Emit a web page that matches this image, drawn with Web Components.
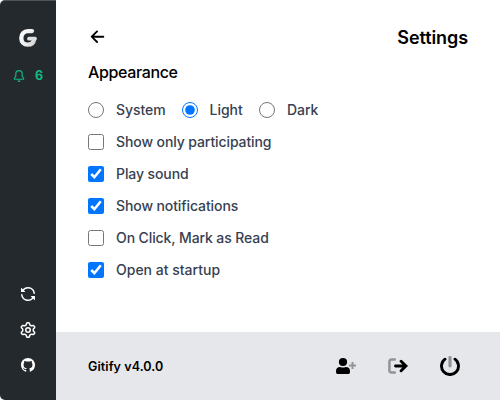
<!DOCTYPE html>
<html lang="en">
<head>
<meta charset="utf-8">
<title>Gitify</title>
<style>
html,body{margin:0;height:100%;background:#fff}
body{font-family:Inter,"Liberation Sans",sans-serif;overflow:hidden}
</style>
</head>
<body>
<gitify-app></gitify-app>
<script>
const svg = (w, h, vb, body) => `<svg width="${w}" height="${h}" viewBox="${vb}" fill="currentColor" aria-hidden="true">${body}</svg>`;
const oct = (size, d) => svg(size, size, '0 0 16 16', `<path fill-rule="evenodd" d="${d}"/>`);
const ICONS = {
  logo: svg(20, 20, '0 0 20 20', '<defs><linearGradient id="g" gradientUnits="userSpaceOnUse" x1="1" y1="4" x2="19" y2="14"><stop offset="0" stop-color="#fff"/><stop offset=".6" stop-color="#ececec"/><stop offset="1" stop-color="#cfcfcf"/></linearGradient></defs><path fill="none" stroke="url(#g)" stroke-width="4.3" stroke-linejoin="round" stroke-linecap="round" d="M14 3.1H10C6.1 3.1 3.3 6 3.3 10s2.4 6.7 6.4 6.7c3.6 0 5.9-1.5 6.3-5.2"/><rect x="9.2" y="8.7" width="9.6" height="3.9" rx="1.6" fill="#dedede"/>'),
  bell: oct(12, 'M8 16a2 2 0 0 0 1.985-1.75c.017-.137-.097-.25-.235-.25h-3.5c-.138 0-.252.113-.235.25A2 2 0 0 0 8 16ZM3 5a5 5 0 0 1 10 0v2.947c0 .05.015.098.042.139l1.703 2.555A1.519 1.519 0 0 1 13.482 13H2.518a1.516 1.516 0 0 1-1.263-2.36l1.703-2.554A.255.255 0 0 0 3 7.947Zm5-3.5A3.5 3.5 0 0 0 4.5 5v2.947c0 .346-.102.683-.294.97l-1.703 2.556a.017.017 0 0 0-.003.01l.001.006c0 .002.002.004.004.006l.006.004.007.001h10.964l.007-.001.006-.004.004-.006.001-.007a.017.017 0 0 0-.003-.01l-1.703-2.554a1.745 1.745 0 0 1-.294-.97V5A3.5 3.5 0 0 0 8 1.5Z'),
  sync: oct(16, 'M1.705 8.005a.75.75 0 0 1 .834.656 5.5 5.5 0 0 0 9.592 2.97l-1.204-1.204a.25.25 0 0 1 .177-.427h3.646a.25.25 0 0 1 .25.25v3.646a.25.25 0 0 1-.427.177l-1.38-1.38A7.002 7.002 0 0 1 1.05 8.84a.75.75 0 0 1 .656-.834ZM8 2.5a5.487 5.487 0 0 0-4.131 1.869l1.204 1.204A.25.25 0 0 1 4.896 6H1.25A.25.25 0 0 1 1 5.75V2.104a.25.25 0 0 1 .427-.177l1.38 1.38A7.002 7.002 0 0 1 14.95 7.16a.75.75 0 0 1-1.49.178A5.5 5.5 0 0 0 8 2.5Z'),
  gear: oct(16, 'M8 0a8.2 8.2 0 0 1 .701.031C9.444.095 9.99.645 10.16 1.29l.288 1.107c.018.066.079.158.212.224.231.114.454.243.668.386.123.082.233.09.299.071l1.103-.303c.644-.176 1.392.021 1.82.63.27.385.506.792.704 1.218.315.675.111 1.422-.364 1.891l-.814.806c-.049.048-.098.147-.088.294.016.257.016.515 0 .772-.01.147.038.246.088.294l.814.806c.475.469.679 1.216.364 1.891a7.977 7.977 0 0 1-.704 1.217c-.428.61-1.176.807-1.82.63l-1.102-.302c-.067-.019-.177-.011-.3.071a5.909 5.909 0 0 1-.668.386c-.133.066-.194.158-.211.224l-.29 1.106c-.168.646-.715 1.196-1.458 1.26a8.006 8.006 0 0 1-1.402 0c-.743-.064-1.289-.614-1.458-1.26l-.289-1.106c-.018-.066-.079-.158-.212-.224a5.738 5.738 0 0 1-.668-.386c-.123-.082-.233-.09-.299-.071l-1.103.303c-.644.176-1.392-.021-1.82-.63a8.12 8.12 0 0 1-.704-1.218c-.315-.675-.111-1.422.363-1.891l.815-.806c.05-.048.098-.147.088-.294a6.214 6.214 0 0 1 0-.772c.01-.147-.038-.246-.088-.294l-.815-.806C.635 6.045.431 5.298.746 4.623a7.92 7.92 0 0 1 .704-1.217c.428-.61 1.176-.807 1.82-.63l1.102.302c.067.019.177.011.3-.071.214-.143.437-.272.668-.386.133-.066.194-.158.211-.224l.29-1.106C6.009.645 6.556.095 7.299.03 7.53.01 7.764 0 8 0Zm-.571 1.525c-.036.003-.108.036-.137.146l-.289 1.105c-.147.561-.549.967-.998 1.189-.173.086-.34.183-.5.29-.417.278-.97.423-1.529.27l-1.103-.303c-.109-.03-.175.016-.195.045-.22.312-.412.644-.573.99-.014.031-.021.11.059.19l.815.806c.411.406.562.957.53 1.456a4.709 4.709 0 0 0 0 .582c.032.499-.119 1.05-.53 1.456l-.815.806c-.081.08-.073.159-.059.19.162.346.353.677.573.989.02.03.085.076.195.046l1.102-.303c.56-.153 1.113-.008 1.53.27.161.107.328.204.501.29.447.222.85.629.997 1.189l.289 1.105c.029.109.101.143.137.146a6.6 6.6 0 0 0 1.142 0c.036-.003.108-.036.137-.146l.289-1.105c.147-.561.549-.967.998-1.189.173-.086.34-.183.5-.29.417-.278.97-.423 1.529-.27l1.103.303c.109.029.175-.016.195-.045.22-.313.411-.644.573-.99.014-.031.021-.11-.059-.19l-.815-.806c-.411-.406-.562-.957-.53-1.456a4.709 4.709 0 0 0 0-.582c-.032-.499.119-1.05.53-1.456l.815-.806c.081-.08.073-.159.059-.19a6.464 6.464 0 0 0-.573-.989c-.02-.03-.085-.076-.195-.046l-1.102.303c-.56.153-1.113.008-1.53-.27a4.44 4.44 0 0 0-.501-.29c-.447-.222-.85-.629-.997-1.189l-.289-1.105c-.029-.11-.101-.143-.137-.146a6.6 6.6 0 0 0-1.142 0ZM11 8a3 3 0 1 1-6 0 3 3 0 0 1 6 0ZM9.5 8a1.5 1.5 0 1 0-3.001.001A1.5 1.5 0 0 0 9.5 8Z'),
  github: oct(14, 'M8 0C3.58 0 0 3.58 0 8c0 3.54 2.29 6.53 5.47 7.59.4.07.55-.17.55-.38 0-.19-.01-.82-.01-1.49-2.01.37-2.53-.49-2.69-.94-.09-.23-.48-.94-.82-1.13-.28-.15-.68-.52-.01-.53.63-.01 1.08.58 1.23.82.72 1.21 1.87.87 2.33.66.07-.52.28-.87.51-1.07-1.78-.2-3.64-.89-3.64-3.95 0-.87.31-1.59.82-2.15-.08-.2-.36-1.02.08-2.12 0 0 .67-.21 2.2.82.64-.18 1.32-.27 2-.27s1.36.09 2 .27c1.53-1.04 2.2-.82 2.2-.82.44 1.1.16 1.92.08 2.12.51.56.82 1.27.82 2.15 0 3.07-1.87 3.75-3.65 3.95.29.25.54.73.54 1.48 0 1.07-.01 1.93-.01 2.2 0 .21.15.46.55.38A8.01 8.01 0 0 0 16 8c0-4.42-3.58-8-8-8Z'),
  back: oct(20, 'M7.78 12.53a.75.75 0 0 1-1.06 0L2.47 8.28a.75.75 0 0 1 0-1.06l4.25-4.25a.751.751 0 0 1 1.042.018.751.751 0 0 1 .018 1.042L4.81 7h7.44a.75.75 0 0 1 0 1.5H4.81l2.97 2.97a.75.75 0 0 1 0 1.06Z'),
  adduser: svg(20, 20, '0 0 20 20', '<circle cx="7" cy="6" r="4.1"/><path d="M0 16.2V15a4.2 4.2 0 0 1 4.2-4.1c1 .5 1.8.7 2.8.7s1.8-.2 2.8-.7A4.2 4.2 0 0 1 14 15v1.2q0 1.8-1.5 1.8h-11Q0 18 0 16.2Z"/><path opacity=".36" d="M15.5 6h2v2.6H20v2h-2.5V13h-2v-2.4H13v-2h2.5z"/>'),
  logout: svg(20, 20, '0 0 20 20', '<path fill="none" stroke="currentColor" stroke-opacity=".36" stroke-width="2.5" stroke-linecap="round" stroke-linejoin="round" d="M6.8 3.5H3.6Q1.4 3.5 1.4 5.7v8.6q0 2.2 2.2 2.2h3.2"/><path fill="none" stroke="currentColor" stroke-width="2.9" stroke-linecap="round" d="M7.5 10H18M13.1 5.2 18 10l-4.9 4.8"/>'),
  power: svg(20, 20, '0 0 20 20', '<path fill="none" stroke="currentColor" stroke-width="2.9" stroke-linecap="round" d="M5 3.2a8.5 8.5 0 1 0 10 0"/><rect x="8.4" y="0" width="3.2" height="11.4" rx="1.4" opacity=".36"/>')
};
function define(name, html) {
  const t = document.createElement('template');
  t.innerHTML = html;
  customElements.define(name, class extends HTMLElement {
    constructor() {
      super();
      this.attachShadow({mode: 'open'}).append(t.content.cloneNode(true));
    }
  });
}
customElements.define('app-icon', class extends HTMLElement {
  connectedCallback() {
    if (this.shadowRoot) return;
    this.attachShadow({mode: 'open'}).innerHTML = `<style>:host{display:flex;flex:none}svg{display:block}</style>${ICONS[this.getAttribute('name')]}`;
  }
});
customElements.define('setting-field', class extends HTMLElement {
  connectedCallback() {
    if (this.shadowRoot) return;
    const type = this.getAttribute('type') || 'checkbox';
    this.attachShadow({mode: 'open'}).innerHTML = `<style>
      :host{display:flex;height:20px}
      label{display:flex;align-items:center;gap:12px;font-size:14px;line-height:20px;font-weight:500;color:#374151;white-space:nowrap;letter-spacing:var(--track,-.1px)}
      input{width:16px;height:16px;margin:0;flex:none}
    </style><label><input type="${type}" ${this.hasAttribute('checked') ? 'checked' : ''}><slot></slot></label>`;
  }
});
define('app-sidebar', `<style>
  :host{display:flex;flex-direction:column;align-items:center;width:56px;box-sizing:border-box;background:#24292e;color:#fff;padding:27px 0 28px;border-top:1px solid #50555a;border-radius:5px 0 0 5px}
  .count{display:flex;align-items:center;gap:10px;margin-top:21px;color:#10b981;font-size:12.5px;line-height:14px;font-weight:700}
  nav{margin-top:auto;display:flex;flex-direction:column;align-items:center;gap:20px}
</style>
<app-icon name="logo"></app-icon>
<div class="count"><app-icon name="bell"></app-icon><span>6</span></div>
<nav><app-icon name="sync"></app-icon><app-icon name="gear"></app-icon><app-icon name="github"></app-icon></nav>`);
define('settings-header', `<style>
  :host{display:flex;justify-content:space-between;align-items:flex-start;height:28px;padding:24px 32px 0;color:#000}
  app-icon{margin-top:3px}
  h1{margin:0;font-size:18px;line-height:28px;font-weight:600;letter-spacing:-.08px}
</style><app-icon name="back"></app-icon><h1><slot></slot></h1>`);
define('settings-group', `<style>
  :host{display:flex;flex-direction:column;gap:12px;padding:8px 32px}
  h2{margin:0 0 4px;font-size:16px;line-height:24px;font-weight:500;color:#000;letter-spacing:-.36px}
</style><h2><slot name="title"></slot></h2><slot></slot>`);
define('app-footer', `<style>
  :host{display:flex;align-items:center;justify-content:space-between;height:68px;box-sizing:border-box;background:#e5e7eb;margin-top:auto;padding:0 40px 0 32px;color:#000}
  span{font-size:12.5px;line-height:16px;font-weight:600;letter-spacing:.08px;padding-top:1px}
  div{display:flex;gap:32px}
</style><span><slot></slot></span><div><app-icon name="adduser"></app-icon><app-icon name="logout"></app-icon><app-icon name="power"></app-icon></div>`);
define('gitify-app', `<style>
  :host{display:flex;width:500px;height:400px;background:#fff}
  main{flex:1;display:flex;flex-direction:column;min-width:0}
  .radios{display:flex;gap:16px;--track:-.06px}
  .radios setting-field:last-child{margin-left:.4px}
  .wide{--track:0px}
</style>
<app-sidebar></app-sidebar>
<main>
  <settings-header>Settings</settings-header>
  <settings-group>
    <span slot="title">Appearance</span>
    <div class="radios"><setting-field type="radio">System</setting-field><setting-field type="radio" checked>Light</setting-field><setting-field type="radio">Dark</setting-field></div>
    <setting-field>Show only participating</setting-field>
    <setting-field checked>Play sound</setting-field>
    <setting-field checked>Show notifications</setting-field>
    <setting-field>On Click, Mark as Read</setting-field>
    <setting-field class="wide" checked>Open at startup</setting-field>
  </settings-group>
  <app-footer>Gitify v4.0.0</app-footer>
</main>`);
</script>
</body>
</html>
